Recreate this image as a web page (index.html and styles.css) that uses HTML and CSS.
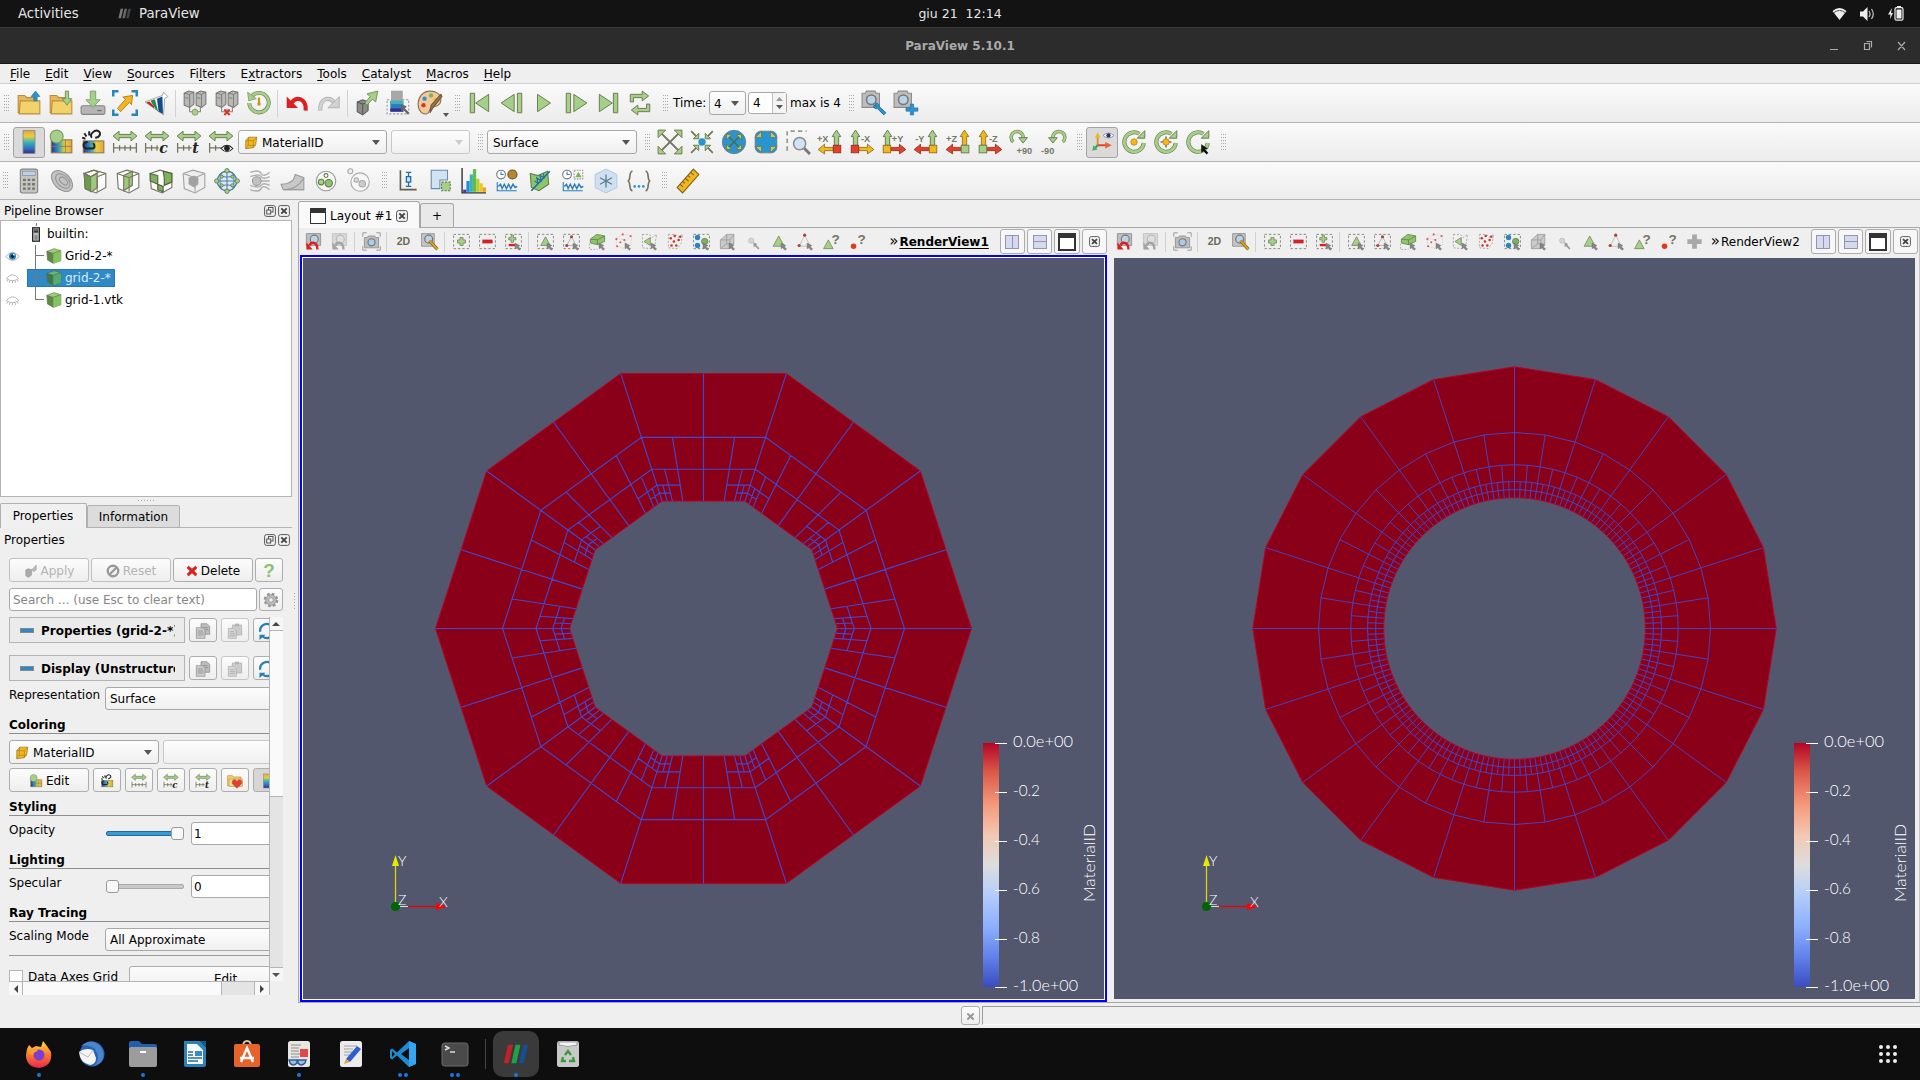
FILE: index.html
```html
<!DOCTYPE html>
<html lang="en">
<head>
<meta charset="utf-8">
<title>ParaView 5.10.1</title>
<link rel="stylesheet" href="styles.css">
</head>
<body>
<svg class="paints" aria-hidden="true">
<defs>
  <linearGradient id="viridis" x1="0" y1="0" x2="0" y2="1"><stop offset="0" stop-color="#e8a33a"/><stop offset=".25" stop-color="#e6cf3c"/><stop offset=".5" stop-color="#3fb3b5"/><stop offset=".75" stop-color="#2a7cc0"/><stop offset="1" stop-color="#3b2a8c"/></linearGradient>
  <linearGradient id="viridish" x1="0" y1="0" x2="1" y2="0"><stop offset="0" stop-color="#3b2a8c"/><stop offset=".35" stop-color="#2b9cc0"/><stop offset=".65" stop-color="#e6cf3c"/><stop offset="1" stop-color="#e8a33a"/></linearGradient>
  <linearGradient id="coolwarm" x1="0" y1="0" x2="0" y2="1"><stop offset="0" stop-color="#b40426"/><stop offset=".12" stop-color="#da5a49"/><stop offset=".25" stop-color="#f4987a"/><stop offset=".38" stop-color="#f2c9b4"/><stop offset=".5" stop-color="#dddddd"/><stop offset=".62" stop-color="#b5cdfa"/><stop offset=".75" stop-color="#8db0fe"/><stop offset=".88" stop-color="#6180e9"/><stop offset="1" stop-color="#3b4cc0"/></linearGradient>
  <linearGradient id="fire" x1="0" y1="0" x2="0" y2="1"><stop offset="0" stop-color="#ffdc3c"/><stop offset=".5" stop-color="#ff7a2c"/><stop offset="1" stop-color="#e8254f"/></linearGradient>
</defs>
</svg>
<svg class="defs" aria-hidden="true">
<symbol id="i-open" viewBox="0 0 24 24"><path d="M2 5h6l2 2h8v14H2z" fill="#eab65c" stroke="#b98d3e"/><path d="M4 10h18v12H3z" fill="#f2d36b" stroke="#b98d3e"/><path d="M18 1l4 5h-2.500v4h-3V6H14z" fill="#2a94d0" stroke="#1b6fa5" stroke-width=".6"/></symbol>
<symbol id="i-load" viewBox="0 0 24 24"><path d="M2 5h6l2 2h8v14H2z" fill="#eab65c" stroke="#b98d3e"/><path d="M4 10h18v12H3z" fill="#f2d36b" stroke="#b98d3e"/><path d="M16 1h3v7h3l-4.500 6L13 8h3z" fill="#a5d08a" stroke="#6f8a55" stroke-width=".8"/></symbol>
<symbol id="i-save" viewBox="0 0 24 24"><rect x="1" y="14.500" width="22" height="8" rx="1.500" fill="#b5b5b5" stroke="#858585"/><path d="M16 19h4" stroke="#666"/><path d="M9.500 1h5v8h4L12 16 5.500 9h4z" fill="#a5d08a" stroke="#7f9a68" stroke-width=".8"/></symbol>
<symbol id="i-extract" viewBox="0 0 24 24"><path d="M1 6V1h5M18 1h5v5M1 18v5h5M18 23h5v-5" fill="none" stroke="#2786bd" stroke-width="2.600"/><path d="M19 5l-9 1.500 2.500 2L5 17l3 3 8-8.500 2 2z" fill="#f3b71c" stroke="#a57c1e" stroke-width=".8"/></symbol>
<symbol id="i-flask" viewBox="0 0 24 24"><path d="M1 11L17 5l1-3 4 4-3 2-1 15z" fill="#fff" stroke="#999" stroke-width=".8"/><path d="M2 11.500l3-1 5 5-1 1z" fill="#c22"/><path d="M6 10l4-1.500 3 11-2-1.500z" fill="#1e8a44"/><path d="M12 8l5-2 .5 16-4-2z" fill="#144a85"/></symbol>
<symbol id="i-server" viewBox="0 0 24 24"><path d="M7 15v5h10v-5M12 17v4" stroke="#888" fill="none"/><path d="M2 3l4-2 5 1v11l-4 3-5-2zM13 3l4-2 5 1v11l-4 3-5-2z" fill="#b8b8b6" stroke="#77776f"/><path d="M2 3l5 1 4-2M7 4v11M13 3l5 1 4-2M18 4v11M3 7l3 .7M14 7l3 .7" stroke="#77776f" stroke-width=".8" fill="none"/></symbol>
<symbol id="i-connect" viewBox="0 0 24 24"><use href="#i-server"/><circle cx="12" cy="20.500" r="2.800" fill="#a5d08a" stroke="#6f8a55" stroke-width=".6"/></symbol>
<symbol id="i-disconnect" viewBox="0 0 24 24"><use href="#i-server"/><path d="M9.500 18l5 5m0-5l-5 5" stroke="#d9342b" stroke-width="2"/></symbol>
<symbol id="i-reload" viewBox="0 0 24 24"><path d="M5 6a9 9 0 1 1-2 6" fill="none" stroke="#6f7f55" stroke-width="3.600"/><path d="M5 6a9 9 0 1 1-2 6" fill="none" stroke="#a5d08a" stroke-width="2.400"/><path d="M1.500 2l1 8 7-2z" fill="#a5d08a" stroke="#6f8a55" stroke-width=".6"/><path d="M12 7v5" stroke="#c9961c" stroke-width="2"/><circle cx="12" cy="13" r="1.600" fill="#c9961c"/></symbol>
<symbol id="i-undo" viewBox="0 0 24 24"><path d="M7 12c4-7 14-4 13 7" fill="none" stroke="#dc2021" stroke-width="3.800"/><path d="M2.500 6v10.500H13z" fill="#dc2021"/></symbol>
<symbol id="i-redo" viewBox="0 0 24 24"><path d="M17 12C13 5 3 8 4 19" fill="none" stroke="#aaa" stroke-width="3.800"/><path d="M17 12C13 5 3 8 4 19" fill="none" stroke="#d2d2d2" stroke-width="2.400"/><path d="M21.500 6v10.500H11z" fill="#d2d2d2" stroke="#aaa" stroke-width=".7"/></symbol>
<symbol id="i-cubeout" viewBox="0 0 24 24"><path d="M3 11l5-2 5 2v8l-5 4-5-3z" fill="#8c8c88" stroke="#5c5c55"/><path d="M3 11l5 2 5-2M8 13v9" stroke="#5c5c55" fill="none"/><path d="M22 1L12 3.500 15 6l-5 6 2 2 5-5.500L20 11z" fill="#a5d08a" stroke="#6f8a55" stroke-width=".8"/></symbol>
<symbol id="i-pickbar" viewBox="0 0 24 24"><rect x="1" y="9" width="20" height="13" fill="none" stroke="#999" stroke-dasharray="2 1.500"/><rect x="5" y="1" width="10" height="10" fill="#a8a8a8" stroke="#999" stroke-width=".6"/><rect x="4" y="10" width="12" height="10" fill="#2a7cc0"/><path d="M4 10h12v3H4z" fill="#3fb3b5"/><path d="M4 17h12v3H4z" fill="#3b2a8c"/><path d="M14 13v7l2-1.500 4 4 1.500-1.500-4-4L19 15z" fill="#666"/></symbol>
<symbol id="i-palette" viewBox="0 0 24 24"><path d="M12 1C5 1 1 7 1 13s4 10 8 9 1-5 5-6 8-2 8-7-4-8-10-8z" fill="#f1c99b" stroke="#8a7254"/><circle cx="7" cy="8" r="2" fill="#2a94d0"/><circle cx="6" cy="14" r="2" fill="#dc3021"/><circle cx="13" cy="5" r="2" fill="#78b85c"/><circle cx="17" cy="9" r="1.800" fill="#f3b71c"/><path d="M22 4l1 2-8 10-3 5 1-7z" fill="#a8772a" stroke="#655"/></symbol>
<symbol id="i-first" viewBox="0 0 24 24"><path d="M3 3h4v18H3zM20 4v16L8 12z" class="g"/></symbol>
<symbol id="i-prev" viewBox="0 0 24 24"><path d="M14 4v16L2 12zM17 3h4v18h-4z" class="g"/></symbol>
<symbol id="i-play" viewBox="0 0 24 24"><path d="M6 4v16l12-8z" class="g"/></symbol>
<symbol id="i-next" viewBox="0 0 24 24"><path d="M10 4v16l12-8zM3 3h4v18H3z" class="g"/></symbol>
<symbol id="i-last" viewBox="0 0 24 24"><path d="M17 3h4v18h-4zM4 4v16l12-8z" class="g"/></symbol>
<symbol id="i-loop" viewBox="0 0 24 24"><path d="M3 11V4h11V1l6 4.500L14 10V7H6v4zM21 13v7H10v3l-6-4.500L10 14v3h8v-4z" class="g"/></symbol>
<symbol id="i-cam" viewBox="0 0 24 24"><path d="M1 3h3l1-2h8l1 2h3v13H1z" fill="#bdbdbd" stroke="#8a8a8a"/><circle cx="9.500" cy="9" r="4.400" fill="#b9d3ea" stroke="#777" stroke-width="1.400"/></symbol>
<symbol id="i-camedit" viewBox="0 0 24 24"><use href="#i-cam"/><path d="M13 13c2-2 4 0 3.500 2l6.500 6-2 2-6-6c-2 1-4-1-3-3l2 1z" fill="#2a94d0" stroke="#1b5f8f" stroke-width=".7"/></symbol>
<symbol id="i-camadd" viewBox="0 0 24 24"><use href="#i-cam"/><path d="M16 13h3v3.500h4v3h-4V23h-3v-3.500h-4v-3h4z" fill="#2a94d0" stroke="#1b6fa5" stroke-width=".6"/></symbol>
<symbol id="i-bar" viewBox="0 0 24 24"><rect x="6.500" y="1.500" width="11" height="21" fill="url(#viridis)" stroke="#888" stroke-width=".8"/></symbol>
<symbol id="i-editmap" viewBox="0 0 24 24"><rect x="3" y="10" width="19" height="12" fill="url(#viridish)" stroke="#8a7a55"/><path d="M16 10v12M3 16h19" stroke="#8a7a55" stroke-width=".8"/><circle cx="8" cy="7" r="6" fill="#a5d08a" stroke="#7f9a68"/></symbol>
<symbol id="i-sepmap" viewBox="0 0 24 24"><rect x="3" y="11" width="19" height="11" fill="url(#viridish)" stroke="#8a7a55"/><path d="M7 12c-5 0-5 6 0 6h4c3 0 3-3 1-5M11 8c-3-3 3-8 6-6 3 2 1 6-3 6M4 4l2 3M2 8l3 1M8.500 2v4" fill="none" stroke="#222" stroke-width="1.800"/></symbol>
<symbol id="i-rescale" viewBox="0 0 24 24"><path d="M1 6.500L6.500 2v3h11V2L23 6.500 17.500 11V8h-11v3z" class="g"/><path d="M1.500 13v9M22.500 13v9M1.500 17.500h21M7 15v5M12 15v5M17 15v5" stroke="#74745f" stroke-width="1.200"/></symbol>
<symbol id="i-rescalec" viewBox="0 0 24 24"><path d="M1 6.500L6.500 2v3h11V2L23 6.500 17.500 11V8h-11v3z" class="g"/><path d="M1.500 13v9M1.500 17.500h12M7 15v5M12 15v5" stroke="#74745f" stroke-width="1.200"/><text x="14" y="22" class="bi">c</text></symbol>
<symbol id="i-rescalet" viewBox="0 0 24 24"><path d="M1 6.500L6.500 2v3h11V2L23 6.500 17.500 11V8h-11v3z" class="g"/><path d="M1.500 13v9M1.500 17.500h13M7 15v5M12 15v5" stroke="#74745f" stroke-width="1.200"/><text x="15" y="22" class="bi">t</text></symbol>
<symbol id="i-rescalev" viewBox="0 0 24 24"><path d="M1 6.500L6.500 2v3h11V2L23 6.500 17.500 11V8h-11v3z" class="g"/><path d="M1.500 13v9M1.500 17.500h12M7 15v5" stroke="#74745f" stroke-width="1.200"/><path d="M12 18q5.500-6 11 0-5.500 6-11 0z" fill="#eee" stroke="#222"/><circle cx="17.500" cy="17.800" r="2.600" fill="#222"/></symbol>
<symbol id="i-ybox" viewBox="0 0 24 24"><path d="M3 8l5-6h14l-2 13-4 5-13 2z" fill="#f3b71c" stroke="#7d6318" stroke-width="1"/><path d="M3 8h13l6-6M16 8v12M8 2L7 16l-4 5M7 16h13" stroke="#9a7a1c" fill="none"/></symbol>
<symbol id="i-resetcam" viewBox="0 0 24 24"><path d="M4 4l16 16M20 4L4 20" stroke="#74745f" stroke-width="1.800"/><path d="M1 1h7L1 8zM23 1v7l-7-7zM1 23v-7l7 7zM23 23h-7l7-7z" class="g"/></symbol>
<symbol id="i-zoomdata" viewBox="0 0 24 24"><path d="M2 2l5 5M22 2l-5 5M2 22l5-5M22 22l-5-5" stroke="#74745f" stroke-width="1.600"/><path d="M9 9H4l5-5zM15 9V4l5 5zM9 15v5l-5-5zM15 15h5l-5 5z" class="g"/><circle cx="12" cy="12" r="3.400" fill="#2a94d0"/></symbol>
<symbol id="i-globe1" viewBox="0 0 24 24"><circle cx="12" cy="12" r="10.800" fill="#2a94d0" stroke="#777" stroke-width=".8"/><path d="M7 7l10 10M17 7L7 17" stroke="#4c6a4f" stroke-width="1.400"/><path d="M5 5h5l-5 5zM19 5v5l-5-5zM5 19v-5l5 5zM19 19h-5l5-5z" class="g"/></symbol>
<symbol id="i-globe2" viewBox="0 0 24 24"><rect x="2" y="2" width="20" height="20" rx="5" fill="#2a94d0" stroke="#777" stroke-width=".8"/><path d="M8 8H2l6-6zM16 8V2l6 6zM8 16v6l-6-6zM16 16h6l-6 6z" class="g"/></symbol>
<symbol id="i-zoombox" viewBox="0 0 24 24"><path d="M2 20V2h18" fill="none" stroke="#999" stroke-width="1.600" stroke-dasharray="4 3"/><path d="M17 17l6 6" stroke="#777" stroke-width="2.600"/><circle cx="13.500" cy="13.500" r="5.600" fill="#cfe3f5" stroke="#8a8a8a" stroke-width="1.400"/></symbol>
<symbol id="i-px" viewBox="0 0 24 24"><path d="M16 15V7h-2l4-6 4 6h-2v8z" class="g"/><path d="M15 17H7v-3l-6 5 6 4v-3h8z" fill="#f3b71c" stroke="#7d6318" stroke-width=".7"/><rect x="15" y="15" width="7" height="7" fill="#e0412c" stroke="#8a2a1e" stroke-width=".7"/><text x="0" y="12" class="ax">+X</text></symbol>
<symbol id="i-mx" viewBox="0 0 24 24"><path d="M4 15V7H2l4-6 4 6H8v8z" class="g"/><path d="M9 17h8v-3l6 5-6 4v-3H9z" fill="#f3b71c" stroke="#7d6318" stroke-width=".7"/><rect x="2" y="15" width="7" height="7" fill="#e0412c" stroke="#8a2a1e" stroke-width=".7"/><text x="11" y="12" class="ax">-X</text></symbol>
<symbol id="i-py" viewBox="0 0 24 24"><path d="M4 15V7H2l4-6 4 6H8v8z" class="g"/><path d="M9 17h8v-3l6 5-6 4v-3H9z" fill="#e0412c" stroke="#8a2a1e" stroke-width=".7"/><rect x="2" y="15" width="7" height="7" fill="#f3b71c" stroke="#7d6318" stroke-width=".7"/><text x="10" y="12" class="ax">+Y</text></symbol>
<symbol id="i-my" viewBox="0 0 24 24"><path d="M16 15V7h-2l4-6 4 6h-2v8z" class="g"/><path d="M15 17H7v-3l-6 5 6 4v-3h8z" fill="#e0412c" stroke="#8a2a1e" stroke-width=".7"/><rect x="15" y="15" width="7" height="7" fill="#f3b71c" stroke="#7d6318" stroke-width=".7"/><text x="2" y="12" class="ax">-Y</text></symbol>
<symbol id="i-pz" viewBox="0 0 24 24"><path d="M16 15V7h-2l4-6 4 6h-2v8z" fill="#f3b71c" stroke="#7d6318" stroke-width=".7"/><path d="M15 17H7v-3l-6 5 6 4v-3h8z" fill="#e0412c" stroke="#8a2a1e" stroke-width=".7"/><rect x="15" y="15" width="7" height="7" class="g"/><text x="1" y="12" class="ax">+Z</text></symbol>
<symbol id="i-mz" viewBox="0 0 24 24"><path d="M4 15V7H2l4-6 4 6H8v8z" fill="#f3b71c" stroke="#7d6318" stroke-width=".7"/><path d="M9 17h8v-3l6 5-6 4v-3H9z" fill="#e0412c" stroke="#8a2a1e" stroke-width=".7"/><rect x="2" y="15" width="7" height="7" class="g"/><text x="11" y="12" class="ax">-Z</text></symbol>
<symbol id="i-p90" viewBox="0 0 24 24"><path d="M4 12a5.500 5.500 0 1 1 9-4" fill="none" stroke="#6f7f55" stroke-width="3.200"/><path d="M4 12a5.500 5.500 0 1 1 9-4" fill="none" stroke="#a5d08a" stroke-width="2"/><path d="M9 8h8l-4 5z" class="g"/><text x="7" y="23" class="ax">+90</text></symbol>
<symbol id="i-m90" viewBox="0 0 24 24"><path d="M20 12a5.500 5.500 0 1 0-9-4" fill="none" stroke="#6f7f55" stroke-width="3.200"/><path d="M20 12a5.500 5.500 0 1 0-9-4" fill="none" stroke="#a5d08a" stroke-width="2"/><path d="M15 8H7l4 5z" class="g"/><text x="0" y="23" class="ax">-90</text></symbol>
<symbol id="i-axes" viewBox="0 0 24 24"><path d="M8 15V6" stroke="#e0902c" stroke-width="1.800"/><path d="M5.500 8L8 3l2.500 5z" fill="#f3b71c"/><path d="M8 15h9" stroke="#e0412c" stroke-width="1.800"/><path d="M15 12l6 3-6 3z" fill="#f0602c"/><path d="M8 15l-3 3" stroke="#3f9f5f" stroke-width="2"/><path d="M3 20l1-5 4 4z" fill="#4caf6a"/><path d="M13 6q5-4.500 10 0-5 4.500-10 0z" fill="#fff" stroke="#88a" stroke-width=".8"/><circle cx="18" cy="6" r="2" fill="#335"/></symbol>
<symbol id="i-rot" viewBox="0 0 24 24"><path d="M17 4.500A9 9 0 1 0 21 13" fill="none" stroke="#6f7f55" stroke-width="3.800"/><path d="M17 4.500A9 9 0 1 0 21 13" fill="none" stroke="#a5d08a" stroke-width="2.500"/><path d="M15 8.500h7V1.500z" class="g"/></symbol>
<symbol id="i-center1" viewBox="0 0 24 24"><use href="#i-rot"/><circle cx="12" cy="12" r="3" fill="#f3b71c" stroke="#a57c1e" stroke-width=".6"/></symbol>
<symbol id="i-center2" viewBox="0 0 24 24"><use href="#i-rot"/><path d="M12 7v10M7 12h10" stroke="#74745f" stroke-width="1.400"/><circle cx="12" cy="12" r="3" fill="#f3b71c" stroke="#a57c1e" stroke-width=".6"/></symbol>
<symbol id="i-center3" viewBox="0 0 24 24"><use href="#i-rot"/><path d="M15 14v8l2-1.500 3 3 1.500-1.500-3-3 2.500-1z" fill="#111"/></symbol>
<symbol id="i-calc" viewBox="0 0 24 24"><rect x="4" y="1" width="16" height="22" rx="2" fill="#c4c4c4" stroke="#858585"/><rect x="6" y="3" width="12" height="4" fill="#b9d3ea" stroke="#888" stroke-width=".6"/><path d="M6.500 11h11M6.500 15h11M6.500 19h11" stroke="#74745f" stroke-width="2.200" stroke-dasharray="2.500 1.700"/></symbol>
<symbol id="i-contour" viewBox="0 0 24 24"><g fill="#c2c2c2" stroke="#979797" transform="rotate(45 12 12)"><ellipse cx="12" cy="12" rx="11.500" ry="7.500"/><ellipse cx="12.500" cy="11.500" rx="8" ry="5"/><ellipse cx="13" cy="11" rx="4.500" ry="2.600"/></g></symbol>
<symbol id="i-clip" viewBox="0 0 24 24"><path d="M2 5l9-3 11 3v13l-9 5-10-4z" fill="#fbfbfb" stroke="#74745f"/><path d="M2 5l6 3 6-3v13l-5 4-6-3z" fill="#9cc97e" stroke="#74745f"/><path d="M2 5l6 3v13.500L3 19z" fill="#6b9a4c" stroke="#74745f" stroke-width=".8"/><path d="M2 5l9-3 4 2-7 4zM14 8l8-3M14 8v14" fill="none" stroke="#74745f"/></symbol>
<symbol id="i-slice" viewBox="0 0 24 24"><path d="M2 5l9-3 11 3v13l-9 5-10-4z" fill="#fbfbfb" stroke="#74745f"/><path d="M8 7l8-4v13l-8 5z" fill="#9cc97e" stroke="#74745f"/><path d="M2 5l11 4 9-4M13 9v13" fill="none" stroke="#74745f"/></symbol>
<symbol id="i-thresh" viewBox="0 0 24 24"><path d="M2 5l9-3 11 3v13l-9 5-10-4z" fill="#fbfbfb" stroke="#74745f"/><path d="M2 5l7 2v8l-7-3zM14 3l8 2v8l-7 3V9zM9 15l5 2v5l-5-2z" fill="#7db35a" stroke="#555a40"/></symbol>
<symbol id="i-subset" viewBox="0 0 24 24"><path d="M2 5l9-3 11 3v13l-9 5-10-4z" fill="#eee" stroke="#a2a2a2"/><path d="M2 5l11 4 9-4M13 9v13" fill="none" stroke="#a2a2a2"/><path d="M7 9l5-2 4 2v6l-4 3-5-3z" fill="#a2a2a2"/></symbol>
<symbol id="i-glyph" viewBox="0 0 24 24"><circle cx="12" cy="12" r="9" fill="#dbe9f6" stroke="#4f7fa8" stroke-width="1.200"/><path d="M3 12h18M12 3v18M5 6q7 5 14 0M5 18q7-5 14 0M7 4q-3 8 0 16M17 4q3 8 0 16" fill="none" stroke="#4f7fa8"/><g fill="#a5d08a" stroke="#5f7f45" stroke-width=".8"><circle cx="12" cy="2.500" r="2"/><circle cx="12" cy="21.500" r="2"/><circle cx="2.500" cy="12" r="2"/><circle cx="21.500" cy="12" r="2"/><circle cx="7" cy="8" r="1.500"/><circle cx="17" cy="8" r="1.500"/><circle cx="7" cy="16" r="1.500"/><circle cx="17" cy="16" r="1.500"/></g></symbol>
<symbol id="i-stream" viewBox="0 0 24 24"><path d="M3 4q8-3 10 1t8-1M3 8q8-3 10 0t8 0M13 12h8M3 16q8 3 10 0t8 0M3 20q8 3 10-1t8 1" fill="none" stroke="#b0b0b0" stroke-width="1.300"/><circle cx="9" cy="12" r="4" fill="#c2c2c2" stroke="#999"/></symbol>
<symbol id="i-warp" viewBox="0 0 24 24"><path d="M1 15c8 0 12-3 13-9l8 3v11H3z" fill="#c8c8c8" stroke="#9c9c9c"/><path d="M3 20c10 0 15-4 19-11M3 20h19" fill="none" stroke="#9c9c9c"/></symbol>
<symbol id="i-group" viewBox="0 0 24 24"><circle cx="12" cy="12" r="9" fill="#f7f7f7" stroke="#999"/><circle cx="7.500" cy="13" r="2.600" fill="#a5d08a" stroke="#5f7f45"/><circle cx="14.500" cy="14" r="3.400" fill="#8fbf70" stroke="#5f7f45"/><circle cx="12" cy="7" r="1.800" fill="#fff" stroke="#5f7f45"/></symbol>
<symbol id="i-ungroup" viewBox="0 0 24 24"><circle cx="13" cy="13" r="8.500" fill="#f7f7f7" stroke="#aaa"/><circle cx="4" cy="3" r="2.300" fill="#eee" stroke="#aaa"/><circle cx="9.500" cy="11" r="2" fill="#ddd" stroke="#aaa"/><circle cx="15" cy="14.500" r="3" fill="#ccc" stroke="#aaa"/></symbol>
<symbol id="i-plot" viewBox="0 0 24 24"><path d="M5 2v18h15" fill="none" stroke="#5f614c" stroke-width="1.500"/><path d="M12.500 4v13M10 4h5M10 17h5" stroke="#1b6fa5" stroke-width="1.200"/><rect x="10.500" y="8" width="4" height="5" fill="#cfe3f5" stroke="#1b6fa5" stroke-width="1.200"/></symbol>
<symbol id="i-probe" viewBox="0 0 24 24"><path d="M3 2h15v9h-7v8H3z" fill="#cfe3f5" stroke="#6f8aa5"/><rect x="12.500" y="13" width="8" height="8" fill="#a5d08a" stroke="#5f7f45" stroke-dasharray="2 1.200"/></symbol>
<symbol id="i-hist" viewBox="0 0 24 24"><path d="M1 0v23h22" fill="none" stroke="#333" stroke-width="1.300"/><path d="M2 20h3v3H2z" fill="#4936a8"/><path d="M5 12h3v10H5z" fill="#1e88e5"/><path d="M8 6h3v16H8z" fill="#37b5b5"/><path d="M11 1h3v21h-3z" fill="#66bb4a"/><path d="M14 10h3v12h-3z" fill="#b2d234"/><path d="M17 14h3v8h-3z" fill="#f3c61c"/><path d="M20 18h3v4h-3z" fill="#f39c1c"/></symbol>
<symbol id="i-time1" viewBox="0 0 24 24"><circle cx="6.500" cy="6" r="4" fill="#fff" stroke="#777"/><path d="M6.500 3.500V6H9" fill="none" stroke="#2a7cc0"/><circle cx="17" cy="6" r="4.200" fill="#b8862e" stroke="#6b5220"/><path d="M3 13v8h18" fill="none" stroke="#2a7cc0"/><path d="M4 17l2-2 1.500 4 2-4 2 4 2-4 2 4 2-4 2 3 2-1" fill="none" stroke="#2a7cc0" stroke-width="1.300"/></symbol>
<symbol id="i-overline" viewBox="0 0 24 24"><path d="M3 5l7 2 9-4 1 12-9 6-7-3z" fill="#8fc46c" stroke="#5f7f45"/><path d="M4 21L21 3" stroke="#1b6fa5" stroke-width="1.600"/><path d="M7 12l3 2-1-5 4 3-1-5 4 2-1-4" fill="none" stroke="#1b6fa5"/></symbol>
<symbol id="i-time2" viewBox="0 0 24 24"><circle cx="6.500" cy="6" r="4" fill="#fff" stroke="#777"/><path d="M6.500 3.500V6H9" fill="none" stroke="#2a7cc0"/><rect x="13" y="2" width="8" height="8" fill="none" stroke="#999" stroke-dasharray="1.500 1"/><path d="M17 3.500l3 5h-6z" fill="#7db35a"/><path d="M3 13v8h18" fill="none" stroke="#2a7cc0"/><path d="M4 17l2-2 1.500 4 2-4 2 4 2-4 2 4 2-4 2 3 2-1" fill="none" stroke="#2a7cc0" stroke-width="1.300"/></symbol>
<symbol id="i-freeze" viewBox="0 0 24 24"><path d="M2 6l10-5 10 5v12l-10 5-10-5z" fill="#cfe1f0" stroke="#b4cbde"/><path d="M12 6v12M6.500 9l11 6M17.500 9l-11 6" stroke="#5f7a90" stroke-width="1.200"/></symbol>
<symbol id="i-braces" viewBox="0 0 24 24"><path d="M6 3C2 3 5 12 1.500 12 5 12 2 21 6 21M18 3c4 0 1 9 4.500 9-3.500 0-.5 9-4.500 9" fill="none" stroke="#74745f" stroke-width="1.500"/><g fill="#2a94d0"><circle cx="8" cy="17" r="1.200"/><circle cx="12" cy="17" r="1.200"/><circle cx="16" cy="17" r="1.200"/></g></symbol>
<symbol id="i-ruler" viewBox="0 0 24 24"><path d="M17 1l5 5L7 23l-5-5z" fill="#f3b71c" stroke="#7d6318"/><path d="M14.500 4l3 2.500M12 7l2 1.600M9.500 9.500l3 2.500M7 12.500l2 1.600M4.500 15l3 2.500" stroke="#7d6318"/></symbol>
<symbol id="i-camundo" viewBox="0 0 24 24"><path d="M3 2h18v15H3z" fill="#bdbdbd" stroke="#8a8a8a"/><circle cx="13" cy="9" r="5" fill="#b9d3ea" stroke="#777" stroke-width="1.400"/><path d="M7 17c2-5 10-5 10 5" fill="none" stroke="#dc2021" stroke-width="3"/><path d="M3 13v9h8z" fill="#dc2021"/></symbol>
<symbol id="i-capture" viewBox="0 0 24 24"><path d="M1 6V1h5M18 1h5v5M1 18v5h5M18 23h5v-5" fill="none" stroke="#999" stroke-width="1.200"/><path d="M3 7h4l1-2h8l1 2h4v13H3z" fill="#bdbdbd" stroke="#8a8a8a"/><circle cx="12" cy="13" r="4.500" fill="#a9cdec" stroke="#777" stroke-width="1.400"/></symbol>
<symbol id="i-2d" viewBox="0 0 24 24"><text x="3.500" y="16.500" class="twod" textLength="17" lengthAdjust="spacingAndGlyphs">2D</text></symbol>
<symbol id="i-adjust" viewBox="0 0 24 24"><path d="M2 2h16v16H2z" fill="#c4c4c4" stroke="#8a8a8a"/><circle cx="11" cy="9" r="5" fill="#b9d3ea" stroke="#777" stroke-width="1.600"/><path d="M12 11l10 11" stroke="#7d6318" stroke-width="4"/><path d="M12 11l10 11" stroke="#d9a520" stroke-width="2.400"/></symbol>
<symbol id="i-dash" viewBox="0 0 24 24"><rect x="2" y="3" width="20" height="18" fill="none" stroke="#858585" stroke-width="1.200" stroke-dasharray="3 2.500"/></symbol>
<symbol id="i-cur" viewBox="0 0 24 24"><path d="M14 14v7l2-1 3 3 2-1.500-3-3 2-1.500z" fill="#858585" stroke="#666" stroke-width=".5"/></symbol>
<symbol id="i-seladd" viewBox="0 0 24 24"><use href="#i-dash"/><path d="M10 7h4v3h3v4h-3v3h-4v-3H7v-4h3z" class="g"/></symbol>
<symbol id="i-selsub" viewBox="0 0 24 24"><use href="#i-dash"/><rect x="6" y="10" width="12" height="4" fill="#dc2021" stroke="#a33" stroke-width=".6"/></symbol>
<symbol id="i-seltog" viewBox="0 0 24 24"><use href="#i-dash"/><path d="M9 4h3v3h3v3h-3v3H9v-3H6V7h3z" class="g"/><rect x="6" y="15" width="8" height="3" fill="#dc2021"/><use href="#i-cur"/></symbol>
<symbol id="i-selcell" viewBox="0 0 24 24"><use href="#i-dash"/><path d="M12 6l6 11H6z" class="g"/><use href="#i-cur"/></symbol>
<symbol id="i-selpt" viewBox="0 0 24 24"><use href="#i-dash"/><path d="M12 6l6 11H6z" fill="none" stroke="#aaa"/><circle cx="12" cy="6" r="2" fill="#a8442c"/><circle cx="6" cy="17" r="2" fill="#a8442c"/><use href="#i-cur"/></symbol>
<symbol id="i-frcell" viewBox="0 0 24 24"><path d="M3 9l8-6 10 2v7l-9 4-9-2z" fill="#8fc46c" stroke="#5f7f45"/><path d="M3 9l9 1 9-5M12 10v6" stroke="#5f7f45" fill="none"/><path d="M2 15v7h10" fill="none" stroke="#999" stroke-dasharray="2 2"/><use href="#i-cur"/></symbol>
<symbol id="i-frpt" viewBox="0 0 24 24"><path d="M3 8l8-5 11 2v11l-8 5-11-3zM3 8l11 2 8-5M14 10v11" fill="none" stroke="#ccc" stroke-dasharray="2 1.500"/><g fill="#e05a4a"><circle cx="3" cy="9" r="1.300"/><circle cx="11" cy="3" r="1.300"/><circle cx="21" cy="5" r="1.300"/><circle cx="13" cy="10" r="1.300"/><circle cx="4" cy="18" r="1.300"/><circle cx="8" cy="13" r="1.300"/></g><use href="#i-cur"/></symbol>
<symbol id="i-polcell" viewBox="0 0 24 24"><path d="M3 3h9l3 4 6-4-2 12-5 6-11-1z" fill="none" stroke="#999" stroke-dasharray="2.500 2"/><path d="M5 12l8-5v10z" class="g"/><use href="#i-cur"/></symbol>
<symbol id="i-polpt" viewBox="0 0 24 24"><path d="M3 3h9l3 4 6-4-2 12-5 6-11-1z" fill="none" stroke="#999" stroke-dasharray="2.500 2"/><g fill="#c8382a"><circle cx="6" cy="8" r="1.600"/><circle cx="11" cy="5" r="1.600"/><circle cx="16" cy="10" r="1.600"/><circle cx="10" cy="12" r="1.600"/><circle cx="7" cy="17" r="1.600"/><circle cx="13" cy="17" r="1.600"/><circle cx="18" cy="6" r="1.600"/></g></symbol>
<symbol id="i-selblock" viewBox="0 0 24 24"><use href="#i-dash"/><circle cx="7" cy="7" r="3.400" fill="#2a84c0"/><circle cx="7" cy="17" r="3.400" fill="#2a84c0"/><circle cx="16" cy="12" r="4" fill="#7db35a" stroke="#5f7f45"/><use href="#i-cur"/></symbol>
<symbol id="i-inter" viewBox="0 0 24 24"><path d="M3 10l8-7h9v12l-5 6H3z" fill="#cacaca" stroke="#9a9a9a"/><path d="M3 10h12l5-7M15 10v11M11 3v12l-8 6M11 15h9" stroke="#9a9a9a" fill="none"/><use href="#i-cur"/></symbol>
<symbol id="i-hover" viewBox="0 0 24 24"><circle cx="9" cy="11" r="3.200" fill="#d6d6d6" stroke="#bbb"/><path d="M12 13v6l2-1 4 4 1.500-1.500-4-4 1-1.500z" fill="#999"/></symbol>
<symbol id="i-icell" viewBox="0 0 24 24"><path d="M11 5l7 13H4z" class="g"/><use href="#i-cur"/></symbol>
<symbol id="i-ipt" viewBox="0 0 24 24"><path d="M11 4l7 14H4z" fill="none" stroke="#bbb"/><circle cx="11" cy="4" r="2" fill="#a8442c"/><circle cx="4" cy="17" r="2" fill="#a8442c"/><use href="#i-cur"/></symbol>
<symbol id="i-qcell" viewBox="0 0 24 24"><path d="M8 10l6 11H2z" class="g"/><text x="12" y="15" class="q">?</text></symbol>
<symbol id="i-qpt" viewBox="0 0 24 24"><circle cx="7" cy="18" r="3.500" fill="#dc3a21"/><text x="12" y="15" class="q">?</text></symbol>
<symbol id="i-gplus" viewBox="0 0 24 24"><path d="M9 3h6v6h6v6h-6v6H9v-6H3V9h6z" fill="#a8a8a8"/></symbol>
<symbol id="i-gcube" viewBox="0 0 24 24"><path d="M2 5l11-4 10 3v15l-11 4-9-5z" fill="#9ccf78" stroke="#66735a"/><path d="M2 5l9 3v15l-8-5z" fill="#5f8745"/><path d="M11 8l12-4v15l-11 4z" fill="#83c45c"/><path d="M2 5l9 3 12-4M11 8v15" fill="none" stroke="#66735a"/></symbol>
<symbol id="i-host" viewBox="0 0 12 20"><rect x="1.500" y="1" width="9" height="18" fill="#bbb" stroke="#222" stroke-width="1.600"/><path d="M3 4h6M3 6.500h6" stroke="#111" stroke-width="1.500"/><path d="M4 11h4v6H4z" fill="#888"/></symbol>
<symbol id="i-eye" viewBox="0 0 24 16"><path d="M1 8q11-13 22 0-11 13-22 0z" fill="#f5f5f5" stroke="#999"/><circle cx="12" cy="7.500" r="5.600" fill="#2389c4"/><circle cx="12" cy="7.500" r="2.800" fill="#0b1720"/><circle cx="14" cy="5" r="1.400" fill="#fff"/></symbol>
<symbol id="i-noeye" viewBox="0 0 24 16"><path d="M2 8q10-12 20 0M2 8q10 7 20 0M4 10l-1 3M8 11.500L7 15M12 12v3.500M16 11.500l1 3.500M20 10l1 3" fill="none" stroke="#aaa" stroke-width="1.400"/></symbol>
<symbol id="i-float" viewBox="0 0 12 12"><rect x=".6" y=".6" width="10.800" height="10.800" rx="2" fill="#f2f2f2" stroke="#555"/><rect x="4.500" y="2.500" width="4.500" height="4.500" fill="none" stroke="#555"/><rect x="2.700" y="5" width="4" height="4" fill="#f2f2f2" stroke="#555"/></symbol>
<symbol id="i-close" viewBox="0 0 12 12"><rect x=".6" y=".6" width="10.800" height="10.800" rx="2" fill="#f2f2f2" stroke="#555"/><path d="M3.300 3.300l5.400 5.400m0-5.400L3.300 8.700" stroke="#444" stroke-width="1.900"/></symbol>
<symbol id="i-copy" viewBox="0 0 24 24"><path d="M9 1h9l4 4v12H9z" fill="#bbb" stroke="#8a8a8a"/><path d="M2 7h9l4 4v12H2z" fill="#ccc" stroke="#8a8a8a"/><path d="M4 12h8M4 15h9M4 18h9M12 7h7M15 10h5" stroke="#8a8a8a" stroke-width="1.200"/></symbol>
<symbol id="i-paste" viewBox="0 0 24 24"><path d="M8 3h14v15H8z" fill="#bbb" stroke="#8a8a8a"/><path d="M12 1h6v4h-6z" fill="#999"/><path d="M2 8h8l4 4v11H2z" fill="#ccc" stroke="#8a8a8a"/><path d="M4 13h7M4 16h8M4 19h8" stroke="#8a8a8a" stroke-width="1.200"/></symbol>
<symbol id="i-refresh" viewBox="0 0 24 24"><path d="M3 13A9 9 0 0 1 18 5M21 11A9 9 0 0 1 6 19" fill="none" stroke="#2a7fb0" stroke-width="3"/><path d="M14 7h8V0zM10 17H2v7z" fill="#2a7fb0"/></symbol>
<symbol id="i-fav" viewBox="0 0 24 24"><path d="M1 4h7l2 2h11v13H1z" fill="#f2d36b" stroke="#b98d3e"/><path d="M3 9h20v11H3z" fill="#f7e08a" stroke="#b98d3e"/><path d="M15 23l-7-7c-2-6 5-8 7-3 2-5 9-3 7 3z" fill="#e0412c" stroke="#a33" stroke-width=".6"/></symbol>
<symbol id="i-gear" viewBox="0 0 24 24"><circle cx="12" cy="12" r="9" fill="none" stroke="#999" stroke-width="4" stroke-dasharray="4 3.070"/><circle cx="12" cy="12" r="8" fill="#bbb" stroke="#888"/><circle cx="12" cy="12" r="3.500" fill="#eee" stroke="#888"/></symbol>
<symbol id="i-apply" viewBox="0 0 24 24"><path d="M3 10l5-2 5 2v9l-5 4-5-3z" fill="#aaa" stroke="#999"/><path d="M13 10l8-8v8l-4 3z" fill="#bbb" stroke="#999"/></symbol>
<symbol id="i-no" viewBox="0 0 24 24"><circle cx="12" cy="12" r="9" fill="none" stroke="#999" stroke-width="4"/><path d="M6 18L18 6" stroke="#999" stroke-width="4"/></symbol>
<symbol id="i-del" viewBox="0 0 24 24"><path d="M5 2l7 6 7-6 3 4-6 6 6 6-3 4-7-6-7 6-3-4 6-6-6-6z" fill="#e0201e" stroke="#a8201e"/></symbol>
<symbol id="i-pv" viewBox="0 0 30 24"><path d="M6 1h6L7 23H1z" fill="var(--a,#c4202c)"/><path d="M15 1h6l-5 22h-6z" fill="var(--b,#21a145)"/><path d="M24 1h6l-5 22h-6z" fill="var(--c,#174d92)"/></symbol>
</svg>

<header class="topbar">
  <span class="activities">Activities</span>
  <span class="appname"><svg class="pvmini"><use href="#i-pv"/></svg>ParaView</span>
  <span class="clock">giu 21&nbsp; 12:14</span>
  <span class="tray">
    <svg width="15" height="14" viewBox="0 0 15 14"><path d="M.5 4Q7.500-2 14.500 4L7.500 13z" fill="#eee"/><path d="M2 5.500q5.500-4 11 0" stroke="#555" fill="none"/></svg>
    <svg width="15" height="14" viewBox="0 0 15 14"><path d="M0 4.500h3L7.500 0v14L3 9.500H0z" fill="#eee"/><path d="M9 4q2 3 0 6M11.500 2q3.500 5 0 10" stroke="#bbb" fill="none" stroke-width="1.300"/></svg>
    <svg width="16" height="15" viewBox="0 0 16 15"><path d="M4 2L0 8.500h2.500L2 13l3-6H3z" fill="#eee"/><rect x="7" y="1.700" width="8" height="12.500" rx="1.500" fill="none" stroke="#eee" stroke-width="1.200"/><path d="M9 0h4v2H9zM8.500 3.500h5v9h-5z" fill="#eee"/></svg>
  </span>
</header>
<div class="titlebar">
  <span>ParaView 5.10.1</span>
  <svg class="winctl" width="76" height="12" viewBox="0 0 76 12"><path d="M0 9.500h8M34.500 3.500h5v6h-5zM36.500 1.500h5v6M68 2l7 8m0-8l-7 8" fill="none" stroke="#aaa" stroke-width="1.200"/></svg>
</div>
<nav class="menubar"><span><u>F</u>ile</span><span><u>E</u>dit</span><span><u>V</u>iew</span><span><u>S</u>ources</span><span>Fi<u>l</u>ters</span><span>E<u>x</u>tractors</span><span><u>T</u>ools</span><span><u>C</u>atalyst</span><span><u>M</u>acros</span><span><u>H</u>elp</span></nav>

<div class="toolbar main" data-icons=": open load save extract flask | connect disconnect reload | undo redo | cubeout pickbar palette* : first prev play next last loop :">
  <span class="time-label">Time:</span>
  <span class="combo time-combo"><span>4</span></span>
  <span class="spin"><b>4</b><i><svg width="7" height="12" viewBox="0 0 7 12"><path d="M3.500 0L7 4H0z" fill="#999"/><path d="M3.500 12L7 8H0z" fill="#555"/></svg></i></span>
  <span class="maxis">max is 4</span>
  <span data-icons=": camedit camadd"></span>
</div>
<div class="toolbar" data-icons=": bar+ editmap sepmap rescale rescalec rescalet rescalev">
  <span class="combo c-array"><svg class="s14"><use href="#i-ybox"/></svg><span>MaterialID</span></span>
  <span class="combo c-comp disabled"></span>
  <span data-icons=":"></span>
  <span class="combo c-rep"><span>Surface</span></span>
  <span data-icons=": resetcam zoomdata globe1 globe2 zoombox px mx py my pz mz p90 m90 : axes+ center1 center2 center3 :"></span>
</div>
<div class="toolbar wide" data-icons=": calc contour clip slice thresh subset glyph stream warp group ungroup : plot probe hist time1 overline time2 freeze braces : ruler"></div>

<main class="work">
  <aside class="side">
    <div class="dock-title"><span>Pipeline Browser</span><svg><use href="#i-float"/></svg><svg><use href="#i-close"/></svg></div>
    <div class="tree">
      <div class="node root"><svg class="host"><use href="#i-host"/></svg><span>builtin:</span></div>
      <div class="node"><svg class="eye"><use href="#i-eye"/></svg><div class="item"><i class="branch"></i><svg class="cube"><use href="#i-gcube"/></svg><span>Grid-2-*</span></div></div>
      <div class="node"><svg class="eye"><use href="#i-noeye"/></svg><div class="item selected"><i class="branch"></i><svg class="cube"><use href="#i-gcube"/></svg><span>grid-2-*</span></div></div>
      <div class="node"><svg class="eye"><use href="#i-noeye"/></svg><div class="item"><i class="branch end"></i><svg class="cube"><use href="#i-gcube"/></svg><span>grid-1.vtk</span></div></div>
    </div>
    <div class="split"><i></i></div>
    <div class="tabs"><span class="tab on">Properties</span><span class="tab">Information</span></div>
    <div class="dock-title props"><span>Properties</span><svg><use href="#i-float"/></svg><svg><use href="#i-close"/></svg></div>
    <div class="btnrow">
      <span class="btn w80 off"><svg class="s14"><use href="#i-apply"/></svg>Apply</span>
      <span class="btn w80 off"><svg class="s14"><use href="#i-no"/></svg>Reset</span>
      <span class="btn w80"><svg class="s12"><use href="#i-del"/></svg>Delete</span>
      <span class="btn w28 help">?</span>
    </div>
    <div class="searchrow"><span class="search">Search ... (use Esc to clear text)</span><span class="btn gear"><svg class="s16"><use href="#i-gear"/></svg></span></div>
    <div class="scroller">
      <div class="pane">
        <div class="grouprow"><span class="group"><i></i><b>Properties (grid-2-*)</b></span><span class="btn w28"><svg class="s16"><use href="#i-copy"/></svg></span><span class="btn w28 faint"><svg class="s16"><use href="#i-paste"/></svg></span><span class="btn w28"><svg class="s18"><use href="#i-refresh"/></svg></span></div>
        <div class="grouprow second"><span class="group"><i></i><b>Display (Unstructured</b></span><span class="btn w28"><svg class="s16"><use href="#i-copy"/></svg></span><span class="btn w28 faint"><svg class="s16"><use href="#i-paste"/></svg></span><span class="btn w28"><svg class="s18"><use href="#i-refresh"/></svg></span></div>
        <div class="field"><label>Representation</label><span class="combo flat">Surface</span></div>
        <h4>Coloring</h4>
        <div class="colorrow"><span class="combo c150"><svg class="s14"><use href="#i-ybox"/></svg><span>MaterialID</span></span><span class="combo c150 disabled"></span></div>
        <div class="maprow"><span class="btn w80"><svg class="s14"><use href="#i-editmap"/></svg>Edit</span><span class="btn w28"><svg class="s14"><use href="#i-sepmap"/></svg></span><span class="btn w28"><svg class="s16"><use href="#i-rescale"/></svg></span><span class="btn w28"><svg class="s16"><use href="#i-rescalec"/></svg></span><span class="btn w28"><svg class="s16"><use href="#i-rescalet"/></svg></span><span class="btn w28"><svg class="s16"><use href="#i-fav"/></svg></span><span class="btn w28 down"><svg class="s16"><use href="#i-bar"/></svg></span></div>
        <h4>Styling</h4>
        <div class="field"><label>Opacity</label><span class="slider full"><i></i></span><span class="input">1</span></div>
        <h4>Lighting</h4>
        <div class="field"><label>Specular</label><span class="slider"><i></i></span><span class="input">0</span></div>
        <h4>Ray Tracing</h4>
        <div class="field"><label>Scaling Mode</label><span class="combo flat">All Approximate</span></div>
        <hr>
        <div class="axesgrid"><i></i><span>Data Axes Grid</span><span class="btn">Edit</span></div>
      </div>
      <div class="vbar"><span><svg width="8" height="4" viewBox="0 0 8 4"><path d="M4 0l4 4H0z" fill="#444"/></svg></span><b></b><span class="dn"><svg width="8" height="4" viewBox="0 0 8 4"><path d="M4 4l4-4H0z" fill="#555"/></svg></span></div>
    </div>
    <div class="hbar"><span><svg width="4" height="8" viewBox="0 0 4 8"><path d="M0 4l4-4v8z" fill="#444"/></svg></span><b></b><i></i><span><svg width="4" height="8" viewBox="0 0 4 8"><path d="M4 4L0 0v8z" fill="#444"/></svg></span></div>
  </aside>
  <div class="vsplit"><i></i></div>
  <section class="layout">
    <div class="ltabs"><span class="ltab on"><i class="win"></i><span>Layout #1</span><svg><use href="#i-close"/></svg></span><span class="ltab plus">+</span></div>
    <div class="views">
      <div class="view active">
        <div class="vhead" data-icons="camundo camundo! | capture | 2d adjust | seladd selsub seltog | selcell selpt frcell frpt polcell polpt selblock inter hover icell ipt qcell qpt"><span class="more">»</span><span class="vname"><u>RenderView1</u></span><span class="vbtns"></span></div>
        <div class="frame"><svg class="scene" data-mesh="coarse" width="801" height="741" viewBox="0 0 801 741"></svg></div>
      </div>
      <div class="view">
        <div class="vhead" data-icons="camundo camundo! | capture | 2d adjust | seladd selsub seltog | selcell selpt frcell frpt polcell polpt selblock inter hover icell ipt qcell qpt gplus"><span class="more">»</span><span class="vname">RenderView2</span><span class="vbtns"></span></div>
        <div class="frame"><svg class="scene" data-mesh="fine" width="801" height="741" viewBox="0 0 801 741"></svg></div>
      </div>
    </div>
  </section>
</main>
<footer class="status"><span class="btn"><svg width="9" height="9" viewBox="0 0 24 24"><path d="M5 2l7 6 7-6 3 4-6 6 6 6-3 4-7-6-7 6-3-4 6-6-6-6z" fill="#999"/></svg></span><span class="progress"></span></footer>

<div class="dock">
  <span class="app d1"><svg viewBox="0 0 28 28"><path d="M2 9l2-4 3 3 4-2 5 1 2-6 4 5 4 6q2 14-12 16Q1 27 1 15z" fill="url(#fire)"/><circle cx="14" cy="15" r="5.500" fill="#7a3fd0"/><path d="M4 9q6-1 9 2-5 1-5 4l-5-1z" fill="#ff9a2e"/></svg></span>
  <span class="app"><svg viewBox="0 0 28 28"><circle cx="15" cy="14" r="12.500" fill="#2c62b4"/><path d="M4 6Q14-3 23 6q7 10 0 17-5 3-6 3 8-8 0-18Q10 4 4 6z" fill="#4a86cc"/><path d="M2 12q6-5 14-2l3 8q0 6-6 7Q3 23 2 12z" fill="#f4f4f4"/><path d="M2 12l9 5 5-7" fill="none" stroke="#bbb"/></svg></span>
  <span class="app d1"><svg viewBox="0 0 28 28"><path d="M0 3q0-2 2-2h8l3 3h13q2 0 2 2v6H0z" fill="#1f5fae"/><rect y="7" width="28" height="20" rx="2" fill="#9c9c9c"/><path d="M11 12h6" stroke="#fff" stroke-width="2"/></svg></span>
  <span class="app"><svg viewBox="0 0 28 28"><path d="M3 1h16l6 6v18q0 2-2 2H5q-2 0-2-2z" fill="#2a82b8"/><path d="M6 4h10l6 6v14H6z" fill="#f4f9fc"/><path d="M19 1h6v6z" fill="#155a86"/><path d="M7 12h5M7 15h5M7 18h14M7 21h10" stroke="#2a6f9e" stroke-width="1.500"/><rect x="14" y="11" width="7" height="5" fill="#3a8ac0"/></svg></span>
  <span class="app"><svg viewBox="0 0 28 28"><path d="M10 7q0-6 4-6t4 6" fill="none" stroke="#d9c2a5" stroke-width="2"/><rect x="1" y="4" width="26" height="23" rx="2" fill="#e8622c"/><path d="M8 22l6-14 6 14M7 18h14" fill="none" stroke="#fff" stroke-width="2.400"/></svg></span>
  <span class="app d1"><svg viewBox="0 0 28 28"><rect x="3" y="1" width="22" height="26" rx="2.500" fill="#e8e6e2"/><path d="M6 5h10M6 8h8M6 11h8M6 14h9M6 17h8" stroke="#aaa" stroke-width="1.400"/><rect x="15" y="9" width="8" height="8" fill="#e24a4a"/><path d="M4 20h8v3q-4 4-7 0zM13 20h8l-1 3q-4 4-7 0z" fill="#9dbce0" stroke="#2d5c9c" stroke-width="1.400"/></svg></span>
  <span class="app"><svg viewBox="0 0 28 28"><rect x="3" y="1" width="22" height="26" rx="2.500" fill="#eceaea"/><path d="M7 6h13M7 9h9M7 12h8M7 15h6" stroke="#bbb" stroke-width="1.300"/><path d="M20 6l4 3-11 13-4-3z" fill="#2d5fd0"/><path d="M9 19l4 3-6 2z" fill="#e5a04a"/></svg></span>
  <span class="app d2"><svg viewBox="0 0 28 28"><path d="M20 1l7 3v20l-7 3L8 15.500l-5 4L1 18V10l2-1.500 5 4z" fill="#1f8ad2"/><path d="M20 8v12l-8-6zM3 11v6l3-3z" fill="#0e0e0e"/><path d="M20 1l7 3v20l-7 3z" fill="#35a5f0"/></svg></span>
  <span class="app d2"><svg viewBox="0 0 28 28"><rect x="1" y="3" width="26" height="23" rx="2.500" fill="#4a4a4a" stroke="#6a6a6a"/><path d="M4 6l4 2-4 2M9 12h5" fill="none" stroke="#ddd" stroke-width="1.400"/></svg></span>
  <i class="dsep"></i>
  <span class="app d1 current"><svg viewBox="0 0 28 28"><use href="#i-pv" width="27" height="20" y="4"/></svg></span>
  <span class="app"><svg viewBox="0 0 28 28"><rect x="3" y="1" width="22" height="26" rx="2.500" fill="#c9c9c9"/><path d="M5 2h18v3q-9 3-18 0z" fill="#f5f5f5" stroke="#888" stroke-width=".8"/><g fill="none" stroke="#3c9a3c" stroke-width="2.400"><path d="M11 15l3-4 3 4M9 17l-1 4h4M19 17l1 4h-5"/></g></svg></span>
  <svg class="apps" viewBox="0 0 20 20"><g fill="#eee"><circle cx="3" cy="3" r="2"/><circle cx="10" cy="3" r="2"/><circle cx="17" cy="3" r="2"/><circle cx="3" cy="10" r="2"/><circle cx="10" cy="10" r="2"/><circle cx="17" cy="10" r="2"/><circle cx="3" cy="17" r="2"/><circle cx="10" cy="17" r="2"/><circle cx="17" cy="17" r="2"/></g></svg>
</div>
<script src="app.js"></script>
</body>
</html>
```
FILE: styles.css
```css
* { box-sizing: border-box; }
body { margin: 0; width: 1920px; height: 1080px; overflow: hidden; display: flex; flex-direction: column; background: #efefef; color: #000; font: 12px "DejaVu Sans", sans-serif; white-space: nowrap; }
svg { flex: none; display: block; }
.paints { position: absolute; width: 0; height: 0; }
.defs { display: none; }
.g { fill: #a5d08a; stroke: #6c7a50; stroke-width: .9; }
.bi { font: italic bold 13px "DejaVu Serif", serif; fill: #222; }
.ax { font: bold 8.500px "Liberation Sans", sans-serif; fill: #77776a; }
.twod { font: bold 13px "Liberation Sans", sans-serif; fill: #6b6b55; }
.q { font: bold 17px "Liberation Sans", sans-serif; fill: #74745f; }
.s12 { width: 12px; height: 12px; }
.s14 { width: 14px; height: 14px; }
.s16 { width: 16px; height: 16px; }
.s18 { width: 18px; height: 18px; }

.topbar { flex: none; height: 27px; background: #131313; color: #e6e6e6; display: grid; grid-template-columns: 120px 1fr auto 1fr 120px; align-items: center; font-size: 13.300px; }
.activities { padding-left: 18px; }
.clock { font-size: 12.500px; }
.appname { display: flex; align-items: center; gap: 8px; }
.pvmini { width: 13px; height: 11px; --a: #777; --b: #666; --c: #444; margin-left: -2px; }
.tray { grid-column: 5; display: flex; gap: 13px; align-items: center; padding-left: 32px; }
.titlebar { flex: none; height: 37px; background: #2c2c2c; border-top: 1px solid #3a3a3a; border-bottom: 1px solid #181818; color: #aaa; font-weight: bold; display: grid; grid-template-columns: 1fr auto 1fr; align-items: center; }
.titlebar span { grid-column: 2; }
.winctl { justify-self: end; margin-right: 14px; }
.menubar { flex: none; height: 20px; border-bottom: 1px solid #d0d0d0; display: flex; gap: 15px; padding-left: 10px; line-height: 20px; }
.menubar span { letter-spacing: .01px; }
.menubar u, .vname u { text-underline-offset: 2px; }

.toolbar { flex: none; height: 39px; background: linear-gradient(#fafafa, #ececec); border-bottom: 1px solid #b3b3b3; display: flex; align-items: center; }
.toolbar.wide { height: 38px; }
.toolbar > [data-icons] { display: flex; align-items: center; }
.tool { flex: none; width: 32px; height: 31px; display: flex; align-items: center; justify-content: center; }
.tool svg { width: 26px; height: 26px; }
.tool.drop { width: 36px; }
.tool.drop::after { content: ""; border: 3px solid transparent; border-top: 4px solid #555; border-bottom: 0; align-self: end; margin-bottom: 2px; }
.tool.down { background: #dadada; border: 1px solid #a4a4a4; border-radius: 3px; }
.tool.off { filter: grayscale(1); opacity: .45; }
.wide .tool { width: 33px; }
.sep { flex: none; width: 6px; height: 27px; background: linear-gradient(#d2d2d2, #d2d2d2) 2px 0 / 1px 100% no-repeat; }
.grip { flex: none; width: 16px; height: 17px; padding-right: 4px; display: flex; justify-content: flex-end; }
.grip:first-child, .main > .tool + .grip { width: 13px; }
.wide .grip:first-child { width: 12px; }
.main > .tool + .grip:nth-last-of-type(1) { width: 16px; }
.toolbar .grip::after { content: ""; width: 5px; height: 17px; background: radial-gradient(circle at .5px .5px, #aaa .7px, transparent .9px) 0 0 / 2px 3px; }
.combo { flex: none; height: 24px; border: 1px solid #a8a8a8; border-radius: 3px; background: linear-gradient(#fdfdfd, #f0f0f0); display: flex; align-items: center; gap: 4px; padding: 1px 6px 0 5px; }
.combo:not(.flat)::after { content: ""; margin-left: auto; border: 4px solid transparent; border-top: 5px solid #555; border-bottom: 0; }
.combo.disabled { border-color: #c8c8c8; }
.combo.disabled::after { border-top-color: #ccc; }
.time-label { width: 36px; margin-left: 1px; }
.time-combo { width: 37px; margin-right: 2px; padding-left: 4px; }
.spin { width: 39px; height: 22px; border: 1px solid #a8a8a8; border-radius: 3px; display: flex; background: #fff; }
.spin b { font-weight: normal; width: 23px; padding-left: 4px; line-height: 21px; }
.spin i { flex: 1; border-left: 1px solid #c0c0c0; display: flex; align-items: center; justify-content: center; background: #f4f4f4; }
.maxis { margin-left: 3px; width: 55px; }
.c-array { width: 149px; margin: 0 4px 0 1px; }
.c-comp { width: 79px; }
.c-rep { width: 150px; }
.c-rep + [data-icons] .grip:first-child, .c-comp + [data-icons] .grip { width: 17px; }

.work { flex: none; height: 803px; display: flex; }
.side { flex: none; width: 292px; display: flex; flex-direction: column; }
.dock-title { flex: none; height: 20px; display: flex; align-items: center; gap: 2px; padding: 1px 2px 0 4px; }
.dock-title span { flex: 1; }
.dock-title svg { width: 12px; height: 12px; }
.tree { flex: none; height: 277px; background: #fff; border: 1px solid #b4b4b4; padding-top: 2px; }
.node { height: 22px; display: flex; align-items: center; }
.root { padding-left: 30px; gap: 6px; background: linear-gradient(#777, #777) 35px 0 / 1px 3px no-repeat; }
.host { width: 10px; height: 15px; }
.eye { width: 15px; height: 11px; margin: 0 7px 0 4px; }
.item { height: 18px; display: flex; align-items: center; padding-right: 4px; gap: 3px; }
.selected { background: #3089c7; color: #dceaf5; outline: 1px solid #2478b4; outline-offset: -1px; }
.selected .cube { filter: hue-rotate(30deg) brightness(.85); }
.branch { align-self: flex-start; width: 9px; height: 22px; margin: -2px 0 0 8px; border-left: 1px solid #777; background: linear-gradient(#777, #777) 0 10px / 9px 1px no-repeat; }
.branch.end { height: 11px; }
.cube { width: 17px; height: 16px; margin-left: -2px; }
.split { flex: none; height: 6px; display: flex; justify-content: center; align-items: center; }
.split i { width: 17px; height: 1px; background: repeating-linear-gradient(90deg, #aaa 0 1px, transparent 1px 3px); }
.tabs { flex: none; height: 25px; border-bottom: 1px solid #b4b4b4; display: flex; align-items: flex-end; }
.tab { height: 23px; margin-bottom: -1px; width: 93px; border: 1px solid #b0b0b0; background: #dcdcdc; border-radius: 2px 2px 0 0; text-align: center; line-height: 23px; }
.tab.on { width: 87px; height: 25px; background: #f0f0f0; border-bottom: 0; line-height: 25px; padding-right: 1px; }
.dock-title.props { height: 23px; padding-top: 0; }
.btn { flex: none; height: 24px; border: 1px solid #adadad; border-radius: 3px; background: linear-gradient(#fcfcfc, #eee); display: flex; align-items: center; justify-content: center; gap: 3px; padding-top: 1px; }
.w80 { width: 80px; }
.w28 { width: 28px; }
.btn.off { color: #b4b4b4; border-color: #c0c0c0; }
.btn.faint { border-color: #c6c6c6; }
.btn.faint svg { opacity: .7; }
.btn.down { background: #d6d6d6; }
.help { font: bold 19px "Liberation Sans", sans-serif; color: #8fbf70; }
.btnrow { display: flex; gap: 2px; margin: 7px 0 0 9px; }
.searchrow { display: flex; gap: 2px; margin: 6px 0 0 9px; }
.search { width: 248px; height: 23px; border: 1px solid #a8a8a8; border-radius: 3px; background: #fff; color: #868686; padding-left: 3px; line-height: 22px; }
.gear { width: 24px; height: 23px; padding: 0; }
.scroller { flex: none; height: 364px; margin: 6px 0 0 9px; width: 274px; display: flex; }
.pane { width: 260px; overflow: hidden; display: flex; flex-direction: column; }
.pane > * { flex: none; }
.grouprow { display: flex; gap: 4px; align-items: center; height: 26px; }
.grouprow.second { margin: 12px 0 6px; }
.group { flex: none; width: 176px; height: 26px; border: 1px solid #b4b4b4; background: #ebebeb; display: flex; align-items: center; gap: 7px; padding: 1px 9px 0 10px; }
.group i { flex: none; width: 14px; height: 5px; background: #2a8ac4; border: 1px solid #888; }
.group b { overflow: hidden; }
.field { height: 23px; display: flex; }
.field label { flex: none; width: 96px; height: 16px; line-height: 16px; }
.field .combo { width: 180px; height: 23px; padding-left: 4px; }
h4 { margin: 8px 0 0; font-size: 12px; height: 16px; line-height: 15px; border-bottom: 1px solid #8e8e8e; }
.colorrow { display: flex; gap: 4px; margin-top: 6px; }
.c150 { width: 150px; }
.maprow { display: flex; gap: 4px; margin-top: 4px; }
h4 + .field { margin-top: 6px; }
.slider { flex: none; width: 78px; height: 5px; border: 1px solid #aaa; border-radius: 2px; background: #c8c8c8; margin: 9px 7px 0 1px; position: relative; }
.slider.full { background: #389ad6; border-color: #216b9c; }
.slider i { position: absolute; left: -1px; top: -5px; width: 13px; height: 13px; border: 1px solid #999; border-radius: 3px; background: #f8f8f8; }
.slider.full i { left: auto; right: -1px; }
.input { flex: none; width: 120px; border: 1px solid #a8a8a8; border-radius: 3px; background: #fff; padding-left: 2px; line-height: 22px; }
hr { width: 100%; margin: 4px 0 10px; border: 0; border-top: 1px solid #999; }
.axesgrid { display: flex; height: 24px; }
.axesgrid i { flex: none; width: 14px; height: 14px; border: 1px solid #b4b4b4; background: #fff; margin-top: 4px; }
.axesgrid > span:nth-child(2) { flex: none; width: 101px; padding-left: 5px; margin-right: 5px; line-height: 23px; }
.axesgrid .btn { width: 193px; }
.vbar { flex: none; width: 14px; background: #e4e4e4; border-left: 1px solid #b4b4b4; display: flex; flex-direction: column; }
.vbar span { height: 14px; background: #f6f6f6; border-bottom: 1px solid #b4b4b4; display: flex; align-items: center; justify-content: center; padding-right: 1px; }
.vbar b { height: 166px; background: #fafafa; border-bottom: 1px solid #b4b4b4; }
.vbar .dn { margin-top: auto; border-top: 1px solid #b4b4b4; border-bottom: 0; }
.hbar { flex: none; width: 261px; height: 14px; margin-left: 9px; border-top: 1px solid #b4b4b4; border-right: 1px solid #b4b4b4; display: flex; background: #f8f8f8; }
.hbar span { width: 14px; display: flex; align-items: center; justify-content: center; border-right: 1px solid #b4b4b4; }
.hbar span:last-child { border: 0; }
.hbar b { width: 199px; border-right: 1px solid #b4b4b4; background: #fafafa; }
.hbar i { flex: 1; background: #e4e4e4; border-right: 1px solid #b4b4b4; }
.vsplit { flex: none; width: 6px; display: flex; align-items: center; padding-left: 2px; }
.vsplit i { width: 1px; height: 17px; background: repeating-linear-gradient(#aaa 0 1px, transparent 1px 3px); }

.layout { flex: 1; border-bottom: 1px solid #a8a8a8; display: flex; flex-direction: column; }
.ltabs { flex: none; height: 28px; padding-top: 1px; border-bottom: 1px solid #a8a8a8; display: flex; align-items: flex-end; }
.ltab { border: 1px solid #a8a8a8; border-bottom: 0; border-radius: 3px 3px 0 0; display: flex; align-items: center; padding-top: 1px; }
.ltab.on { width: 122px; height: 27px; margin-bottom: -1px; background: #f9f9f9; gap: 4px; padding-left: 11px; }
.ltab.on svg { width: 12px; height: 12px; }
.win { width: 16px; height: 16px; border: 1px solid #333; border-top-width: 5px; background: #fff; }
.plus { width: 34px; height: 24px; background: #e9e9e9; justify-content: center; }
.views { flex: 1; border-left: 1px solid #a8a8a8; border-right: 1px solid #c4c4c4; display: flex; gap: 4px; padding: 0 0 0 1px; }
.view { flex: none; width: 807px; }
.vhead { height: 27px; display: flex; align-items: center; }
.vhead .tool { width: 26px; height: 27px; }
.vhead .tool svg { width: 19px; height: 19px; }
.vhead .sep { height: 20px; }
.more { margin-left: auto; font-size: 15px; margin-top: -2px; }
.vname { margin: 0 11px 0 1px; }
.active .vname { font-weight: bold; }
.vbtns { display: flex; gap: 2px; }
.vbtns span { width: 25.300px; height: 25px; border: 1px solid #adadad; border-radius: 3px; background: #f7f7f7; display: flex; align-items: center; justify-content: center; }
.vbtns i { display: block; width: 14px; height: 14px; border: 1px solid #9296ac; background: linear-gradient(#9296ac, #9296ac) center / 1px 100% no-repeat #d6daf0; }
.vbtns i.hz { background: linear-gradient(#9296ac, #9296ac) center / 100% 1px no-repeat #d6daf0; }
.vbtns i.max { width: 18px; height: 18px; border: 2px solid #333; border-top-width: 5px; background: #fff; }
.vbtns svg { width: 11px; height: 11px; }
.frame { width: 807px; height: 747px; padding: 3px; }
.active .frame { border: 2px solid #00f; background: #fff; padding: 1px; }
.scene { background: #52576e; }
.scene text { font-family: Lato, sans-serif; font-weight: 300; fill: #fff; }
.num { font-size: 16px; }
.axl { font-size: 14px; }

.status { flex: none; height: 25px; display: flex; align-items: center; padding-left: 961px; gap: 2px; }
.status .btn { width: 19px; height: 19px; }
.progress { flex: 1; height: 19px; border: 1px solid #9c9c9c; border-right: 0; border-bottom-color: #fafafa; }
.dock { flex: none; height: 52px; background: #0e0e0e; display: flex; align-items: center; padding-left: 13px; }
.app { flex: none; width: 52px; height: 52px; display: grid; place-items: center; position: relative; }
.app > svg { width: 28px; height: 28px; }
.d1::after, .d2::after { content: ""; position: absolute; top: 45px; left: 24px; width: 4px; height: 4px; border-radius: 2px; background: #1878e0; }
.d2::after { left: 21px; box-shadow: 6px 0 #1878e0; }
.dsep { width: 1px; height: 30px; margin: 0 4px; background: #444; }
.current { width: 46px; height: 46px; margin: 0 3px; border-radius: 10px; background: #3a3a3a; }
.current::after { top: 42px; left: 21px; }
.apps { width: 20px; height: 20px; margin: 0 22px 0 auto; }
```
FILE: app.js
```js
// Expand the compact tool lists: ":" grip, "|" separator, "+" pressed, "!" disabled, "*" drop-down.
document.querySelectorAll("[data-icons]").forEach(el => {
  const html = el.dataset.icons.split(" ").map(t => {
    if (t === ":") return '<i class="grip"></i>';
    if (t === "|") return '<i class="sep"></i>';
    const cls = t.endsWith("+") ? " down" : t.endsWith("!") ? " off" : t.endsWith("*") ? " drop" : "";
    return `<span class="tool${cls}"><svg><use href="#i-${t.replace(/[+!*]$/, "")}"/></svg></span>`;
  }).join("");
  el.insertAdjacentHTML("afterbegin", html);
});
document.querySelectorAll(".vbtns").forEach(el => {
  el.innerHTML = '<span><i></i></span><span><i class="hz"></i></span><span><i class="max"></i></span><span><svg><use href="#i-close"/></svg></span>';
});

const CX = 400.5, CY = 370.5;
const polar = (r, deg) => [CX + r * Math.cos(deg * Math.PI / 180), CY - r * Math.sin(deg * Math.PI / 180)];
const P = p => p.map(v => v.toFixed(2)).join(" ");
const seg = (a, b) => `M${P(a)}L${P(b)}`;
const ring = (r, n) => "M" + Array.from({ length: n }, (_, i) => P(polar(r, i * 360 / n))).join("L") + "Z";

// Decagon refined towards its inner corners.
function coarse() {
  const R = 268, r = [R, R * .75, R * .625, R * .5625, R * .53125, R * .5];
  let d = ring(r[1], 10) + ring(r[2], 10);
  for (let k = 0; k < 10; k++) {
    const at = (rad, t) => {
      const a = polar(rad, 36 * k), b = polar(rad, 36 * (k + 1));
      return [a[0] + (b[0] - a[0]) * t, a[1] + (b[1] - a[1]) * t];
    };
    for (const t of [0, .5]) d += seg(at(r[0], t), at(r[5], t));
    for (const m of [t => t, t => 1 - t]) {
      d += seg(at(r[1], m(.25)), at(r[5], m(.25)));
      d += seg(at(r[2], m(.125)), at(r[5], m(.125)));
      d += seg(at(r[3], m(.0625)), at(r[5], m(.0625)));
      d += seg(at(r[3], m(0)), at(r[3], m(.25)));
      d += seg(at(r[4], m(0)), at(r[4], m(.125)));
    }
  }
  return { edge: ring(r[0], 10) + ring(r[5], 10), lines: d };
}

// Circle mesh: the number of sectors doubles ring by ring.
function fine() {
  const r = [261.7, 196, 163.7, 146.9, 138.8, 130.8];
  let d = ring(r[1], 40) + ring(r[2], 80) + ring(r[3], 160) + ring(r[4], 160);
  [[0, 1, 20], [1, 2, 40], [2, 3, 80], [3, 5, 160]].forEach(([a, b, n]) => {
    for (let i = 0; i < n; i++) d += seg(polar(r[a], i * 360 / n), polar(r[b], i * 360 / n));
  });
  return { edge: ring(r[0], 20) + ring(r[5], 160), lines: d };
}

document.querySelectorAll(".scene").forEach(svg => {
  const m = svg.dataset.mesh === "coarse" ? coarse() : fine();
  const thin = svg.dataset.mesh === "coarse" ? 1.1 : .9;
  const labels = [["0.0e+00", 485, 60], ["-0.2", 534, 27], ["-0.4", 583, 27], ["-0.6", 632, 27], ["-0.8", 681, 27], ["-1.0e+00", 729, 65]];
  svg.innerHTML = `
    <path d="${m.edge}" fill="#8b0019" fill-rule="evenodd" stroke="#b80025"/>
    <path d="${m.lines}" fill="none" stroke="#3f4ad2" stroke-width="${thin}"/>
    <rect x="680" y="485" width="16" height="244" fill="url(#coolwarm)"/>
    ${labels.map(([t, y, w]) => `<path d="M692 ${y + .5}h12" stroke="#fff"/><text class="num" x="710" y="${y + 4}" textLength="${w}" lengthAdjust="spacingAndGlyphs">${t}</text>`).join("")}
    <text class="num" transform="translate(792 644) rotate(-90)" textLength="78" lengthAdjust="spacingAndGlyphs">MaterialID</text>
    <path d="M92.500 648V606" stroke="#d8d80c" stroke-width="1.300"/><path d="M92.500 597l3.500 11h-7z" fill="#e8e800"/>
    <path d="M97 648.500h8" stroke="#ddd"/><path d="M105 648.500h30" stroke="#e00" stroke-width="1.300"/><path d="M144 648.500l-11-3.500v7z" fill="#f00"/>
    <circle cx="92.500" cy="648.500" r="4.600" fill="#006400"/>
    <text class="axl" x="95" y="608">Y</text><text class="axl" x="95" y="647">Z</text><text class="axl" x="136" y="649">X</text>`;
});
```
